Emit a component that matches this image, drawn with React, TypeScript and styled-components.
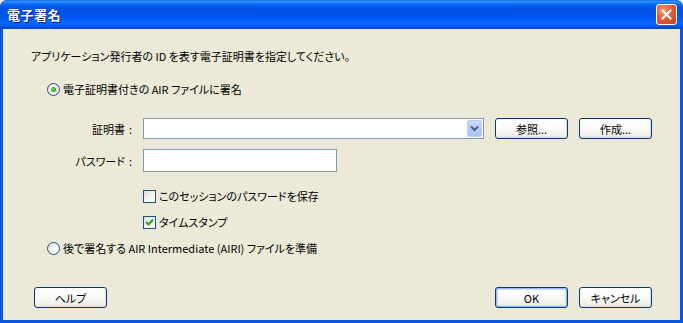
import styled, { createGlobalStyle, css } from "styled-components"

const GlobalStyle = createGlobalStyle`
    html, body {
        margin: 0;
        padding: 0;
        overflow: hidden;
        background: #ece9d8;
    }
    * {
        box-sizing: border-box;
    }
`

const font = `"Noto Sans CJK JP", "Noto Sans", sans-serif`

const Window = styled.div`
    width: 683px;
    height: 323px;
    display: flex;
    flex-direction: column;
    background: #0854dd;
    border-radius: 7px 7px 0 0;
    font-family: ${font};
    font-feature-settings: "palt";
    font-size: 11px;
    color: #000;
`

const TitleBar = styled.div`
    height: 29px;
    flex: none;
    display: flex;
    align-items: center;
    justify-content: space-between;
    padding: 0 6px 0 7px;
    border-radius: 7px 7px 0 0;
    background: linear-gradient(
        to bottom,
        #0058ee 0%,
        #3593ff 4%,
        #288eff 7%,
        #127dff 10%,
        #036ffc 14%,
        #0262ee 18%,
        #0057e5 24%,
        #0054e3 30%,
        #0055eb 56%,
        #005bf5 66%,
        #026afe 76%,
        #0062ef 86%,
        #0052d6 92%,
        #0046c4 100%
    );
`

const Title = styled.div`
    color: #fff;
    font-size: 13px;
    font-weight: 700;
    letter-spacing: 0.5px;
    text-shadow: 1px 1px 0 #0a1883;
`

const CloseButton = styled.div`
    width: 21px;
    height: 21px;
    border: 1px solid #fff;
    border-radius: 3px;
    display: flex;
    align-items: center;
    justify-content: center;
    background: radial-gradient(circle at 35% 30%, #f49a7c 0%, #e45c34 45%, #c8401c 100%);
`

const Body = styled.div`
    flex: 1;
    display: flex;
    flex-direction: column;
    margin: 0 3px 3px 3px;
    background: #ece9d8;
`

const Content = styled.div`
    display: flex;
    flex-direction: column;
    padding: 20px 0 0 28px;
`

const Line = styled.div<{ $top?: number; $indent?: number }>`
    height: 14px;
    line-height: 14px;
    display: flex;
    align-items: center;
    white-space: nowrap;
    margin-top: ${(p) => p.$top ?? 0}px;
    margin-left: ${(p) => p.$indent ?? 0}px;
`

const Radio = styled.span<{ $checked?: boolean }>`
    width: 13px;
    height: 13px;
    flex: none;
    border-radius: 50%;
    border: 1px solid #1c5180;
    margin-right: 3px;
    display: flex;
    align-items: center;
    justify-content: center;
    background: linear-gradient(135deg, #dcdcd6 0%, #f4f4f0 50%, #ffffff 100%);

    ${(p) =>
        p.$checked &&
        css`
            &::after {
                content: "";
                width: 5px;
                height: 5px;
                border-radius: 50%;
                background: radial-gradient(circle at 40% 40%, #5ee05e 0%, #21a121 70%, #1a8a1a 100%);
            }
        `}
`

const CheckBox = styled.span`
    width: 13px;
    height: 13px;
    flex: none;
    border: 1px solid #1c5180;
    margin-right: 3px;
    display: flex;
    align-items: center;
    justify-content: center;
    background: linear-gradient(135deg, #dcdcd6 0%, #f4f4f0 50%, #ffffff 100%);
`

const FormGrid = styled.div`
    display: grid;
    grid-template-columns: 105px auto;
    column-gap: 7px;
    row-gap: 10px;
    margin-top: 22px;
    align-items: center;
`

const FieldLabel = styled.div`
    display: flex;
    justify-content: flex-end;
    align-items: center;
    white-space: nowrap;
`

const Colon = styled.span`
    display: inline-block;
    width: 11px;
    text-align: center;
`

const FieldRow = styled.div`
    display: flex;
    align-items: center;
    gap: 11px;
`

const Combo = styled.div`
    width: 341px;
    height: 21px;
    border: 1px solid #7f9db9;
    background: #fff;
    display: flex;
    justify-content: flex-end;
    align-items: center;
    padding-right: 1px;
`

const ComboArrow = styled.div`
    width: 15px;
    height: 17px;
    border: 1px solid #b9cdf7;
    border-radius: 2px;
    background: linear-gradient(to bottom, #c6d6fc 0%, #b6c9f8 60%, #a8bff5 100%);
    display: flex;
    align-items: center;
    justify-content: center;
`

const TextInput = styled.div`
    width: 194px;
    height: 23px;
    border: 1px solid #7f9db9;
    background: #fff;
`

const Button = styled.div<{ $default?: boolean }>`
    width: 73px;
    height: 21px;
    border: 1px solid #003c74;
    border-radius: 3px;
    display: flex;
    align-items: center;
    justify-content: center;
    white-space: nowrap;
    background: linear-gradient(to bottom, #ffffff 0%, #fcfcfb 40%, #f1f0ea 85%, #dedbcf 100%);
    box-shadow: ${(p) =>
        p.$default
            ? "inset 0 0 0 1px #9ab8f4, inset 0 0 0 2px #cee0fb"
            : "inset -1px -1px 0 #e2ded3"};
`

const Footer = styled.div`
    margin-top: auto;
    display: flex;
    align-items: center;
    padding: 0 28px 12px 31px;
`

const Spacer = styled.div`
    flex: 1;
`

const ButtonGroup = styled.div`
    display: flex;
    gap: 11px;
`

const App = () => {
    return (
        <Window>
            <GlobalStyle />
            <TitleBar>
                <Title>電子署名</Title>
                <CloseButton>
                    <svg width="13" height="13" viewBox="0 0 13 13">
                        <path d="M2.5 2.5 L10.5 10.5 M10.5 2.5 L2.5 10.5" stroke="#fff" strokeWidth="2" strokeLinecap="square" />
                    </svg>
                </CloseButton>
            </TitleBar>
            <Body>
                <Content>
                    <Line>アプリケーション発行者の ID を表す電子証明書を指定してください。</Line>
                    <Line $top={19} $indent={16}>
                        <Radio $checked />
                        電子証明書付きの AIR ファイルに署名
                    </Line>
                    <FormGrid>
                        <FieldLabel>
                            証明書<Colon>:</Colon>
                        </FieldLabel>
                        <FieldRow>
                            <Combo>
                                <ComboArrow>
                                    <svg width="9" height="7" viewBox="0 0 9 7">
                                        <path d="M1 1.5 L4.5 5 L8 1.5" stroke="#4d6185" strokeWidth="2" fill="none" />
                                    </svg>
                                </ComboArrow>
                            </Combo>
                            <Button>参照...</Button>
                            <Button>作成...</Button>
                        </FieldRow>
                        <FieldLabel>
                            パスワード<Colon>:</Colon>
                        </FieldLabel>
                        <FieldRow>
                            <TextInput />
                        </FieldRow>
                    </FormGrid>
                    <Line $top={17} $indent={112}>
                        <CheckBox />
                        このセッションのパスワードを保存
                    </Line>
                    <Line $top={12} $indent={112}>
                        <CheckBox>
                            <svg width="9" height="9" viewBox="0 0 9 9">
                                <path d="M1 4 L3.5 6.5 L8 1.5" stroke="#21a121" strokeWidth="2" fill="none" />
                            </svg>
                        </CheckBox>
                        タイムスタンプ
                    </Line>
                    <Line $top={12} $indent={16}>
                        <Radio />
                        後で署名する AIR Intermediate (AIRI) ファイルを準備
                    </Line>
                </Content>
                <Footer>
                    <Button>ヘルプ</Button>
                    <Spacer />
                    <ButtonGroup>
                        <Button $default>OK</Button>
                        <Button>キャンセル</Button>
                    </ButtonGroup>
                </Footer>
            </Body>
        </Window>
    )
}

export default App
